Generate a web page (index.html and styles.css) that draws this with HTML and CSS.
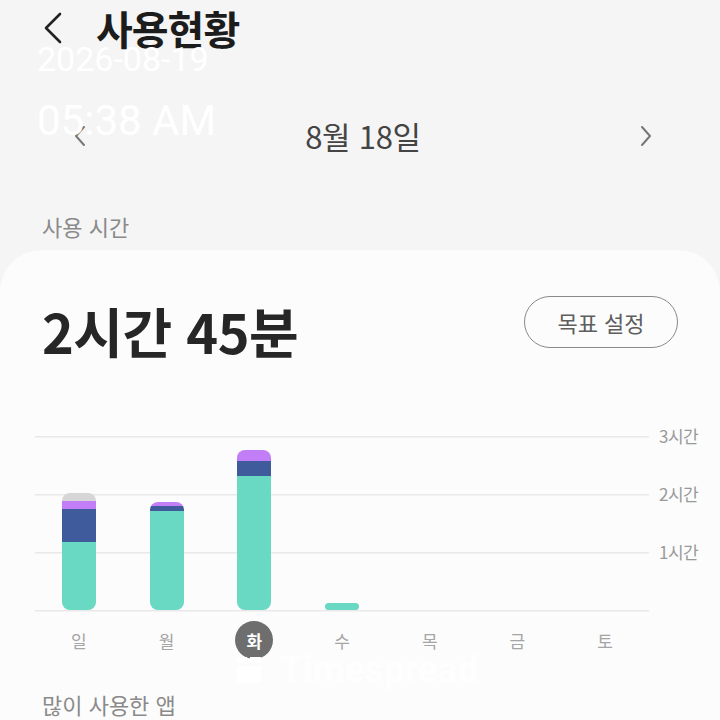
FILE: index.html
```html
<!DOCTYPE html>
<html lang="ko">
<head>
<meta charset="utf-8">
<title>사용현황</title>
<link rel="stylesheet" href="styles.css">
</head>
<body>
<div class="screen">
  <header class="topbar">
    <svg class="back" width="20" height="32" viewBox="0 0 20 32"><path d="M17 2 L3 16 L17 30" fill="none" stroke="#222" stroke-width="2.6" stroke-linecap="round" stroke-linejoin="round"/></svg>
    <h1 class="title">사용현황</h1>
  </header>

  <div class="stamp">
    <div class="stamp-date">2026-08-19</div>
    <div class="stamp-time">05:38 AM</div>
  </div>

  <nav class="datenav">
    <svg class="arrow" width="12" height="22" viewBox="0 0 12 22"><path d="M10 2 L2 11 L10 20" fill="none" stroke="#777" stroke-width="2" stroke-linecap="round" stroke-linejoin="round"/></svg>
    <span class="date">8월 18일</span>
    <svg class="arrow" width="12" height="22" viewBox="0 0 12 22"><path d="M2 2 L10 11 L2 20" fill="none" stroke="#777" stroke-width="2" stroke-linecap="round" stroke-linejoin="round"/></svg>
  </nav>

  <div class="section-label">사용 시간</div>

  <section class="card">
    <div class="summary">
      <div class="total">2시간 45분</div>
      <button class="goal">목표 설정</button>
    </div>

    <div class="chart">
      <div class="plot">
        <div class="col">
          <div class="bar">
            <div class="seg gray" style="height:8px"></div>
            <div class="seg purple" style="height:8px"></div>
            <div class="seg navy" style="height:33px"></div>
            <div class="seg teal" style="height:68px"></div>
          </div>
        </div>
        <div class="col">
          <div class="bar">
            <div class="seg purple" style="height:4px"></div>
            <div class="seg navy" style="height:5px"></div>
            <div class="seg teal" style="height:99px"></div>
          </div>
        </div>
        <div class="col">
          <div class="bar">
            <div class="seg purple" style="height:11px"></div>
            <div class="seg navy" style="height:15px"></div>
            <div class="seg teal" style="height:134px"></div>
          </div>
        </div>
        <div class="col">
          <div class="bar small">
            <div class="seg teal" style="height:7px"></div>
          </div>
        </div>
        <div class="col"></div>
        <div class="col"></div>
        <div class="col"></div>
      </div>
      <div class="yaxis">
        <span>3시간</span>
        <span>2시간</span>
        <span>1시간</span>
      </div>
    </div>

    <div class="days">
      <span class="day">일</span>
      <span class="day">월</span>
      <span class="day active"><i>화</i></span>
      <span class="day">수</span>
      <span class="day">목</span>
      <span class="day">금</span>
      <span class="day">토</span>
    </div>

    <div class="watermark">
      <svg width="26" height="28" viewBox="0 0 26 28"><rect x="1" y="1" width="10" height="6" fill="#fff"/><rect x="14" y="1" width="11" height="6" fill="#fff"/><rect x="1" y="10" width="24" height="17" fill="#fff"/></svg>
      <span>Timespread</span>
    </div>

    <h2 class="apps-label">많이 사용한 앱</h2>
  </section>
</div>
</body>
</html>
```

FILE: styles.css
```css
* { box-sizing: border-box; }
html, body {
  margin: 0;
  padding: 0;
  background: #f5f5f5;
}
body {
  font-family: "Noto Sans CJK KR", "Noto Sans", sans-serif;
  color: #222;
}
.screen {
  position: relative;
  width: 720px;
  height: 720px;
  overflow: hidden;
}
.topbar {
  height: 56px;
  display: flex;
  align-items: center;
  padding-left: 43px;
  gap: 33px;
}
.back { display: block; }
.title {
  margin: 0;
  font-size: 40px;
  font-weight: 700;
  color: #1c1c1c;
  letter-spacing: -1px;
  line-height: 56px;
}
.stamp {
  position: absolute;
  left: 37px;
  top: 36px;
  color: #fff;
  font-family: Roboto, "Liberation Sans", sans-serif;
  z-index: 3;
}
.stamp-date {
  font-size: 34px;
  line-height: 46px;
}
.stamp-time {
  margin-top: 14px;
  font-size: 42px;
  line-height: 50px;
}
.datenav {
  margin-top: 56px;
  height: 48px;
  display: flex;
  align-items: center;
  justify-content: space-between;
  padding: 0 68px 0 74px;
}
.date {
  font-size: 31px;
  color: #444;
  line-height: 48px;
  letter-spacing: -0.3px;
}
.section-label {
  height: 90px;
  display: flex;
  align-items: flex-end;
  padding: 0 0 11px 42px;
  font-size: 22px;
  line-height: 26px;
  color: #8a8a8a;
}
.card {
  position: relative;
  background: #fcfcfc;
  border-radius: 42px 42px 0 0;
  height: 470px;
  padding: 46px 0 0 35px;
}
.summary {
  width: 643px;
  display: flex;
  justify-content: space-between;
  align-items: flex-start;
  padding-left: 7px;
}
.total {
  margin-top: 4px;
  font-size: 54px;
  font-weight: 700;
  line-height: 62px;
  color: #262626;
  letter-spacing: -0.5px;
}
.goal {
  width: 154px;
  height: 52px;
  border: 1.5px solid #8a8a8a;
  border-radius: 26px;
  background: transparent;
  font-family: "Noto Sans CJK KR", sans-serif;
  font-size: 22px;
  color: #5e5e5e;
  padding: 0;
}
.chart {
  margin-top: 74px;
  display: flex;
  align-items: flex-start;
}
.plot {
  flex: none;
  width: 614px;
  height: 176px;
  display: grid;
  grid-template-columns: repeat(7, 1fr);
  align-items: end;
  background:
    linear-gradient(#e9e9e9, #e9e9e9) 0 0 / 100% 1.5px no-repeat,
    linear-gradient(#e9e9e9, #e9e9e9) 0 58px / 100% 1.5px no-repeat,
    linear-gradient(#e9e9e9, #e9e9e9) 0 116px / 100% 1.5px no-repeat,
    linear-gradient(#e9e9e9, #e9e9e9) 0 174px / 100% 1.5px no-repeat;
  padding-bottom: 2px;
}
.col {
  display: flex;
  justify-content: center;
  align-items: flex-end;
  height: 100%;
}
.bar {
  width: 34px;
  border-radius: 8px;
  overflow: hidden;
  display: flex;
  flex-direction: column;
}
.bar.small { border-radius: 4px; }
.seg { width: 100%; }
.teal { background: #69d9c3; }
.navy { background: #3f5b9b; }
.purple { background: #c17ef7; }
.gray { background: #d6d6d6; }
.yaxis {
  margin-top: -12px;
  padding-left: 10px;
  display: flex;
  flex-direction: column;
  white-space: nowrap;
}
.yaxis span {
  height: 58px;
  font-size: 17px;
  line-height: 24px;
  color: #999;
  letter-spacing: -0.5px;
}
.days {
  width: 614px;
  margin-top: 9px;
  display: grid;
  grid-template-columns: repeat(7, 1fr);
  justify-items: center;
}
.day {
  width: 38px;
  height: 38px;
  display: flex;
  align-items: center;
  justify-content: center;
  font-size: 17px;
  color: #a5a5a5;
}
.day.active {
  background: #6e6e6e;
  border-radius: 50%;
  color: #fff;
  font-weight: 700;
}
.day i { font-style: normal; }
.watermark {
  position: absolute;
  left: 236px;
  top: 402px;
  display: flex;
  align-items: center;
  gap: 18px;
  color: rgba(255,255,255,0.95);
  font-family: Roboto, "Liberation Sans", sans-serif;
  font-weight: 700;
  font-size: 37px;
  line-height: 36px;
  z-index: 2;
}
.apps-label {
  margin: 31px 0 0 7px;
  font-size: 22px;
  font-weight: 400;
  line-height: 28px;
  color: #8a8a8a;
}
```
